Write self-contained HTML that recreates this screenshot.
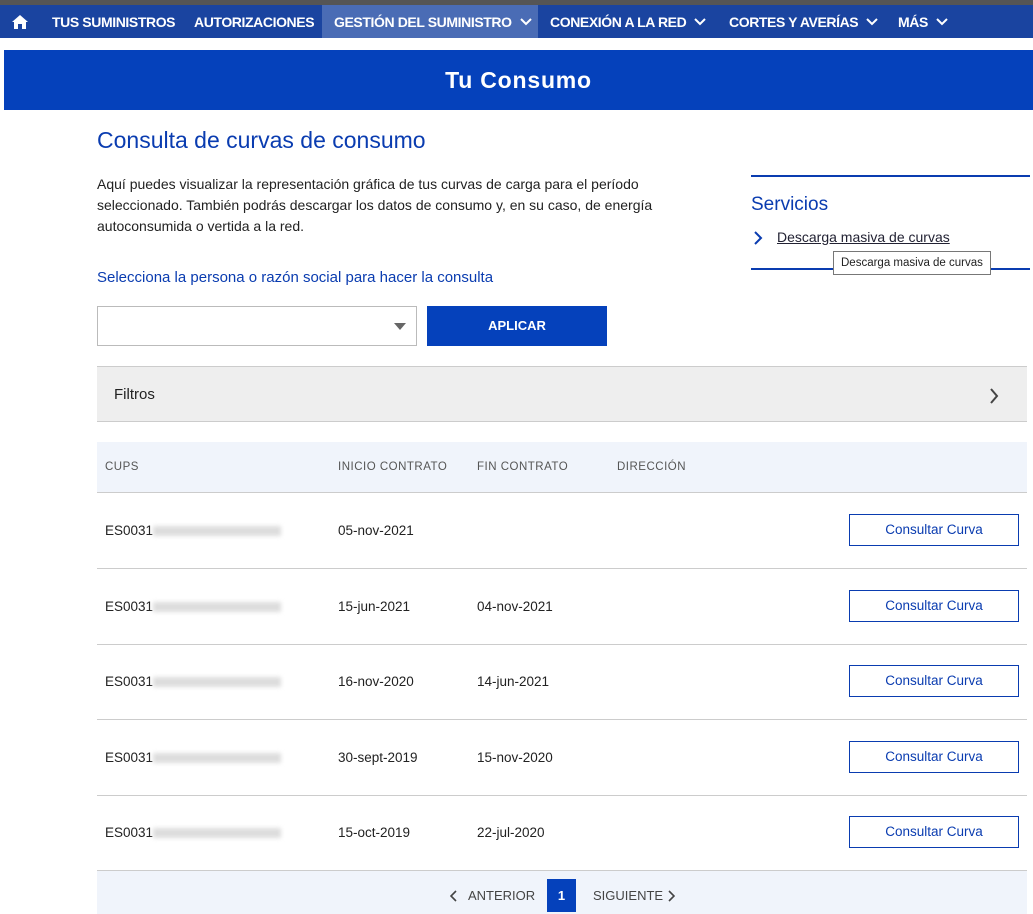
<!DOCTYPE html>
<html><head><meta charset="utf-8"><style>
*{margin:0;padding:0;box-sizing:border-box}
body{width:1033px;height:914px;overflow:hidden;background:#fff;font-family:"Liberation Sans",sans-serif;color:#222;position:relative}
.top{position:absolute;left:0;top:0;width:1033px;height:5px;background:#555}
.nav{position:absolute;left:0;top:5px;width:1033px;height:33px;background:#1a44a0;color:#fff;font-size:14px;font-weight:bold}
.nav span{position:absolute;top:9px;letter-spacing:-.4px;white-space:nowrap}
.nav svg.c{margin-left:8px;vertical-align:1px}
.act{position:absolute;left:322px;top:0;width:216px;height:33px;background:#4a6cb5}
.ban{position:absolute;left:4px;top:50px;width:1029px;height:60px;background:#0541bb;color:#fff;font-size:23px;text-align:center;line-height:60px;letter-spacing:.8px;font-weight:bold}
.a{position:absolute}
h1{position:absolute;left:97px;top:127px;font-size:23px;font-weight:normal;color:#0a3cb0}
.p{left:97px;top:174px;font-size:14px;line-height:21px;color:#222;width:600px}
.row{position:absolute;left:97px;width:930px;border-bottom:1px solid #ccc;height:76px}
.row div{position:absolute;top:30px;font-size:13.5px}
.btn{position:absolute;left:752px!important;top:21px!important;width:170px;height:32px;border:1px solid #0a3cb0;color:#0a3cb0;text-align:center;line-height:30px;font-size:13px}
.blur{display:inline-block;width:128px;height:10px;background:#ddd;filter:blur(2px);vertical-align:middle}
</style></head><body>
<div class="top"></div>
<div class="nav"><div class="act"></div>
<svg style="position:absolute;left:12px;top:9px" width="16" height="16" viewBox="0 0 16 16"><path d="M8 1L0 8h2v7h4v-5h4v5h4V8h2z" fill="#fff"/></svg>
<span style="left:52px">TUS SUMINISTROS</span><span style="left:194px">AUTORIZACIONES</span>
<span style="left:334px">GESTIÓN DEL SUMINISTRO<svg class="c" width="12" height="8" viewBox="0 0 12 8"><path d="M1 1l5 5 5-5" stroke="#fff" stroke-width="2" fill="none"/></svg></span>
<span style="left:550px">CONEXIÓN A LA RED<svg class="c" width="12" height="8" viewBox="0 0 12 8"><path d="M1 1l5 5 5-5" stroke="#fff" stroke-width="2" fill="none"/></svg></span>
<span style="left:729px">CORTES Y AVERÍAS<svg class="c" width="12" height="8" viewBox="0 0 12 8"><path d="M1 1l5 5 5-5" stroke="#fff" stroke-width="2" fill="none"/></svg></span>
<span style="left:898px">MÁS<svg class="c" width="12" height="8" viewBox="0 0 12 8"><path d="M1 1l5 5 5-5" stroke="#fff" stroke-width="2" fill="none"/></svg></span></div>
<div class="ban">Tu Consumo</div>
<h1>Consulta de curvas de consumo</h1>
<div class="a p">Aquí puedes visualizar la representación gráfica de tus curvas de carga para el período seleccionado. También podrás descargar los datos de consumo y, en su caso, de energía autoconsumida o vertida a la red.</div>
<div class="a" style="left:97px;top:269px;font-size:15px;color:#0a3cb0">Selecciona la persona o razón social para hacer la consulta</div>
<div class="a" style="left:97px;top:306px;width:320px;height:40px;border:1px solid #bbb"><div style="position:absolute;right:10px;top:16px;border:6px solid transparent;border-top:7px solid #666"></div></div>
<div class="a" style="left:427px;top:306px;width:180px;height:40px;background:#0541bb;color:#fff;font-size:13px;font-weight:bold;text-align:center;line-height:40px">APLICAR</div>
<div class="a" style="left:751px;top:175px;width:279px;height:95px;border-top:2px solid #0a3cb0;border-bottom:2px solid #0a3cb0"></div>
<div class="a" style="left:751px;top:194px;font-size:19px;color:#0a3cb0">Servicios</div>
<svg class="a" style="left:753px;top:231px" width="10" height="14" viewBox="0 0 10 14"><path d="M2 1l6 6-6 6" stroke="#0a3cb0" stroke-width="2" fill="none"/></svg>
<div class="a" style="left:777px;top:229px;font-size:14px;text-decoration:underline;color:#223;white-space:nowrap">Descarga masiva de curvas</div>
<div class="a" style="left:833px;top:251px;width:158px;height:24px;background:#fff;border:1px solid #777;font-size:11.5px;line-height:22px;padding-left:7px;white-space:nowrap">Descarga masiva de curvas</div>
<div class="a" style="left:97px;top:366px;width:930px;height:56px;background:#eee;border-top:1px solid #ccc;border-bottom:1px solid #ccc"><span style="position:absolute;left:17px;top:19px;font-size:15px">Filtros</span>
<svg style="position:absolute;right:28px;top:21px" width="10" height="16" viewBox="0 0 10 16"><path d="M2 1l6 7-6 7" stroke="#444" stroke-width="2" fill="none"/></svg></div>
<div class="a" style="left:97px;top:442px;width:930px;height:51px;background:#f0f4fb;border-bottom:1px solid #ccc;font-size:11.5px;color:#555;letter-spacing:.5px">
<span style="position:absolute;left:8px;top:19px">CUPS</span><span style="position:absolute;left:241px;top:19px">INICIO CONTRATO</span><span style="position:absolute;left:380px;top:19px">FIN CONTRATO</span><span style="position:absolute;left:520px;top:19px">DIRECCIÓN</span></div>
<div class="row" style="top:493px"><div style="left:8px">ES0031<span class="blur"></span></div><div style="left:241px">05-nov-2021</div><div class="btn">Consultar Curva</div></div>
<div class="row" style="top:569px"><div style="left:8px">ES0031<span class="blur"></span></div><div style="left:241px">15-jun-2021</div><div style="left:380px">04-nov-2021</div><div class="btn">Consultar Curva</div></div>
<div class="row" style="top:644px"><div style="left:8px">ES0031<span class="blur"></span></div><div style="left:241px">16-nov-2020</div><div style="left:380px">14-jun-2021</div><div class="btn">Consultar Curva</div></div>
<div class="row" style="top:720px"><div style="left:8px">ES0031<span class="blur"></span></div><div style="left:241px">30-sept-2019</div><div style="left:380px">15-nov-2020</div><div class="btn">Consultar Curva</div></div>
<div class="row" style="top:795px"><div style="left:8px">ES0031<span class="blur"></span></div><div style="left:241px">15-oct-2019</div><div style="left:380px">22-jul-2020</div><div class="btn">Consultar Curva</div></div>
<div class="a" style="left:97px;top:871px;width:930px;height:43px;background:#f0f4fb;font-size:13px;color:#444">
<svg style="position:absolute;left:353px;top:19px" width="8" height="12" viewBox="0 0 8 12"><path d="M6 1L1 6l5 5" stroke="#444" stroke-width="1.6" fill="none"/></svg>
<span style="position:absolute;left:371px;top:17px">ANTERIOR</span>
<span style="position:absolute;left:450px;top:8px;width:29px;height:33px;background:#0541bb;color:#fff;font-weight:bold;text-align:center;line-height:33px">1</span>
<span style="position:absolute;left:496px;top:17px">SIGUIENTE</span>
<svg style="position:absolute;left:570px;top:19px" width="8" height="12" viewBox="0 0 8 12"><path d="M2 1l5 5-5 5" stroke="#444" stroke-width="1.6" fill="none"/></svg></div>
</body></html>
